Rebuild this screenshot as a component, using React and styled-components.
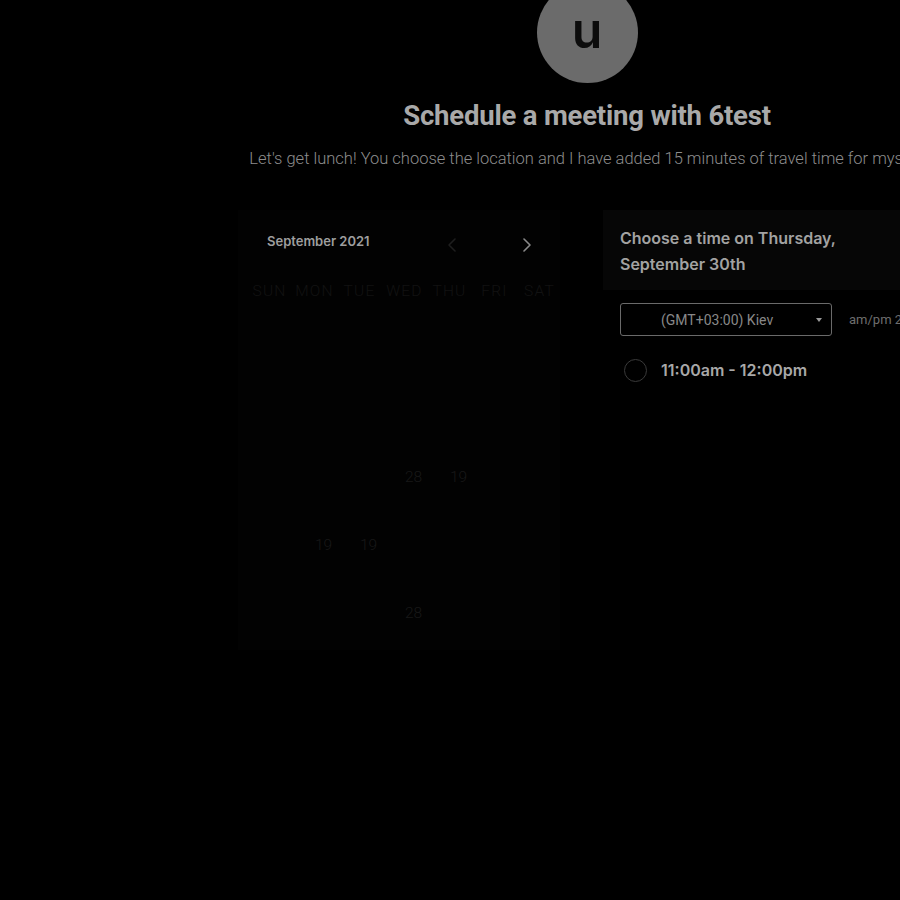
import styled, { createGlobalStyle } from "styled-components";

const GlobalStyle = createGlobalStyle`
  html, body {
    margin: 0;
    padding: 0;
    background: #000;
    overflow: hidden;
  }
`;

const Page = styled.div`
  width: 1174px;
  display: flex;
  flex-direction: column;
  align-items: center;
  font-family: Roboto, "Liberation Sans", sans-serif;
`;

const Avatar = styled.div`
  margin-top: -18px;
  width: 101px;
  height: 101px;
  border-radius: 50%;
  background: #6b6b6b;
  color: #0c0c0c;
  font-family: Inter, sans-serif;
  font-weight: 600;
  font-size: 50px;
  line-height: 1;
  display: flex;
  align-items: center;
  justify-content: center;
  padding-bottom: 6px;
  box-sizing: border-box;
`;

const Title = styled.h1`
  margin: 17px 0 0;
  font-size: 27.5px;
  line-height: 32px;
  font-weight: 700;
  color: #a9a9a9;
  letter-spacing: -0.2px;
`;

const Subtitle = styled.p`
  margin: 17px 0 0;
  font-size: 16.5px;
  line-height: 20px;
  font-weight: 300;
  color: #8d8d8d;
  white-space: nowrap;
`;

const Content = styled.div`
  margin-top: 41px;
  display: flex;
  gap: 43px;
  align-items: flex-start;
`;

const CalendarCard = styled.div`
  width: 322px;
  height: 440px;
  background: #020202;
  box-sizing: border-box;
  padding: 22px 9px 0;
  font-family: Inter, sans-serif;
`;

const CalendarHeader = styled.div`
  display: flex;
  align-items: center;
  height: 18px;
  padding-left: 20px;
`;

const MonthLabel = styled.div`
  font-size: 13px;
  font-weight: 600;
  color: #9e9e9e;
  flex: 1;
`;

const ArrowButton = styled.div`
  width: 16px;
  display: flex;
  justify-content: center;
  margin-top: 8px;
  margin-right: ${(p) => p.$mr}px;
  color: ${(p) => p.$color};
`;

const DayGrid = styled.div`
  display: grid;
  grid-template-columns: repeat(7, 45px);
  margin-top: 31px;
`;

const DayName = styled.div`
  text-align: center;
  font-family: Roboto, sans-serif;
  font-weight: 300;
  font-size: 15.5px;
  letter-spacing: 1.2px;
  line-height: 20px;
  color: #121212;
`;

const DateCell = styled.div`
  height: 68px;
  display: flex;
  align-items: center;
  justify-content: center;
  padding-left: 18px;
  box-sizing: border-box;
  font-family: Roboto, sans-serif;
  font-weight: 300;
  font-size: 15.5px;
  color: #181818;
`;

const DatesGrid = styled.div`
  display: grid;
  grid-template-columns: repeat(7, 45px);
  margin-top: 6px;
`;

const TimePanel = styled.div`
  width: 333px;
  font-family: Inter, sans-serif;
`;

const PanelHeader = styled.div`
  height: 80px;
  background: #060606;
  box-sizing: border-box;
  padding: 15px 17px 0;
  font-size: 16px;
  line-height: 26px;
  font-weight: 600;
  color: #a2a2a2;
`;

const Controls = styled.div`
  display: flex;
  align-items: center;
  gap: 17px;
  margin: 13px 0 0 17px;
`;

const Select = styled.div`
  width: 212px;
  height: 33px;
  box-sizing: border-box;
  border: 1px solid #6a6a6a;
  border-radius: 3px;
  display: flex;
  align-items: center;
  padding: 0 9px 0 40px;
  font-family: Roboto, sans-serif;
  font-size: 14px;
  color: #888;
`;

const SelectText = styled.span`
  flex: 1;
`;

const Caret = styled.span`
  width: 0;
  height: 0;
  border-left: 3.5px solid transparent;
  border-right: 3.5px solid transparent;
  border-top: 4px solid #9a9a9a;
`;

const FormatLabel = styled.span`
  font-family: Roboto, sans-serif;
  font-size: 13px;
  color: #6e6e6e;
  white-space: nowrap;
`;

const Slot = styled.div`
  display: flex;
  align-items: center;
  gap: 14px;
  margin: 21px 0 0 21px;
  height: 26px;
`;

const Radio = styled.span`
  width: 21px;
  height: 21px;
  border-radius: 50%;
  border: 1px solid #3a3a3a;
`;

const SlotText = styled.span`
  font-size: 16px;
  font-weight: 600;
  color: #a8a8a8;
`;

const days = ["SUN", "MON", "TUE", "WED", "THU", "FRI", "SAT"];

// only the dates that still read through the overlay
const dates = [
  ["", "", "", "", "", "", ""],
  ["", "", "", "", "", "", ""],
  ["", "", "", "28", "19", "", ""],
  ["", "19", "19", "", "", "", ""],
  ["", "", "", "28", "", "", ""],
];

const Chevron = ({ dir }) => (
  <svg width="8" height="14" viewBox="0 0 8 14" fill="none">
    <path
      d={dir === "left" ? "M7 1L1 7l6 6" : "M1 1l6 6-6 6"}
      stroke="currentColor"
      strokeWidth="1.6"
      strokeLinecap="round"
      strokeLinejoin="round"
    />
  </svg>
);

export default function App() {
  return (
    <>
      <GlobalStyle />
      <Page>
        <Avatar>u</Avatar>
        <Title>Schedule a meeting with 6test</Title>
        <Subtitle>
          Let's get lunch! You choose the location and I have added 15 minutes
          of travel time for myself.
        </Subtitle>
        <Content>
          <CalendarCard>
            <CalendarHeader>
              <MonthLabel>September 2021</MonthLabel>
              <ArrowButton $mr={59} $color="#1e1e1e">
                <Chevron dir="left" />
              </ArrowButton>
              <ArrowButton $mr={16} $color="#8a8a8a">
                <Chevron dir="right" />
              </ArrowButton>
            </CalendarHeader>
            <DayGrid>
              {days.map((d) => (
                <DayName key={d}>{d}</DayName>
              ))}
            </DayGrid>
            <DatesGrid>
              {dates.flat().map((d, i) => (
                <DateCell key={i}>{d}</DateCell>
              ))}
            </DatesGrid>
          </CalendarCard>
          <TimePanel>
            <PanelHeader>
              Choose a time on Thursday,
              <br />
              September 30th
            </PanelHeader>
            <Controls>
              <Select>
                <SelectText>(GMT+03:00) Kiev</SelectText>
                <Caret />
              </Select>
              <FormatLabel>am/pm 24h</FormatLabel>
            </Controls>
            <Slot>
              <Radio />
              <SlotText>11:00am - 12:00pm</SlotText>
            </Slot>
          </TimePanel>
        </Content>
      </Page>
    </>
  );
}
